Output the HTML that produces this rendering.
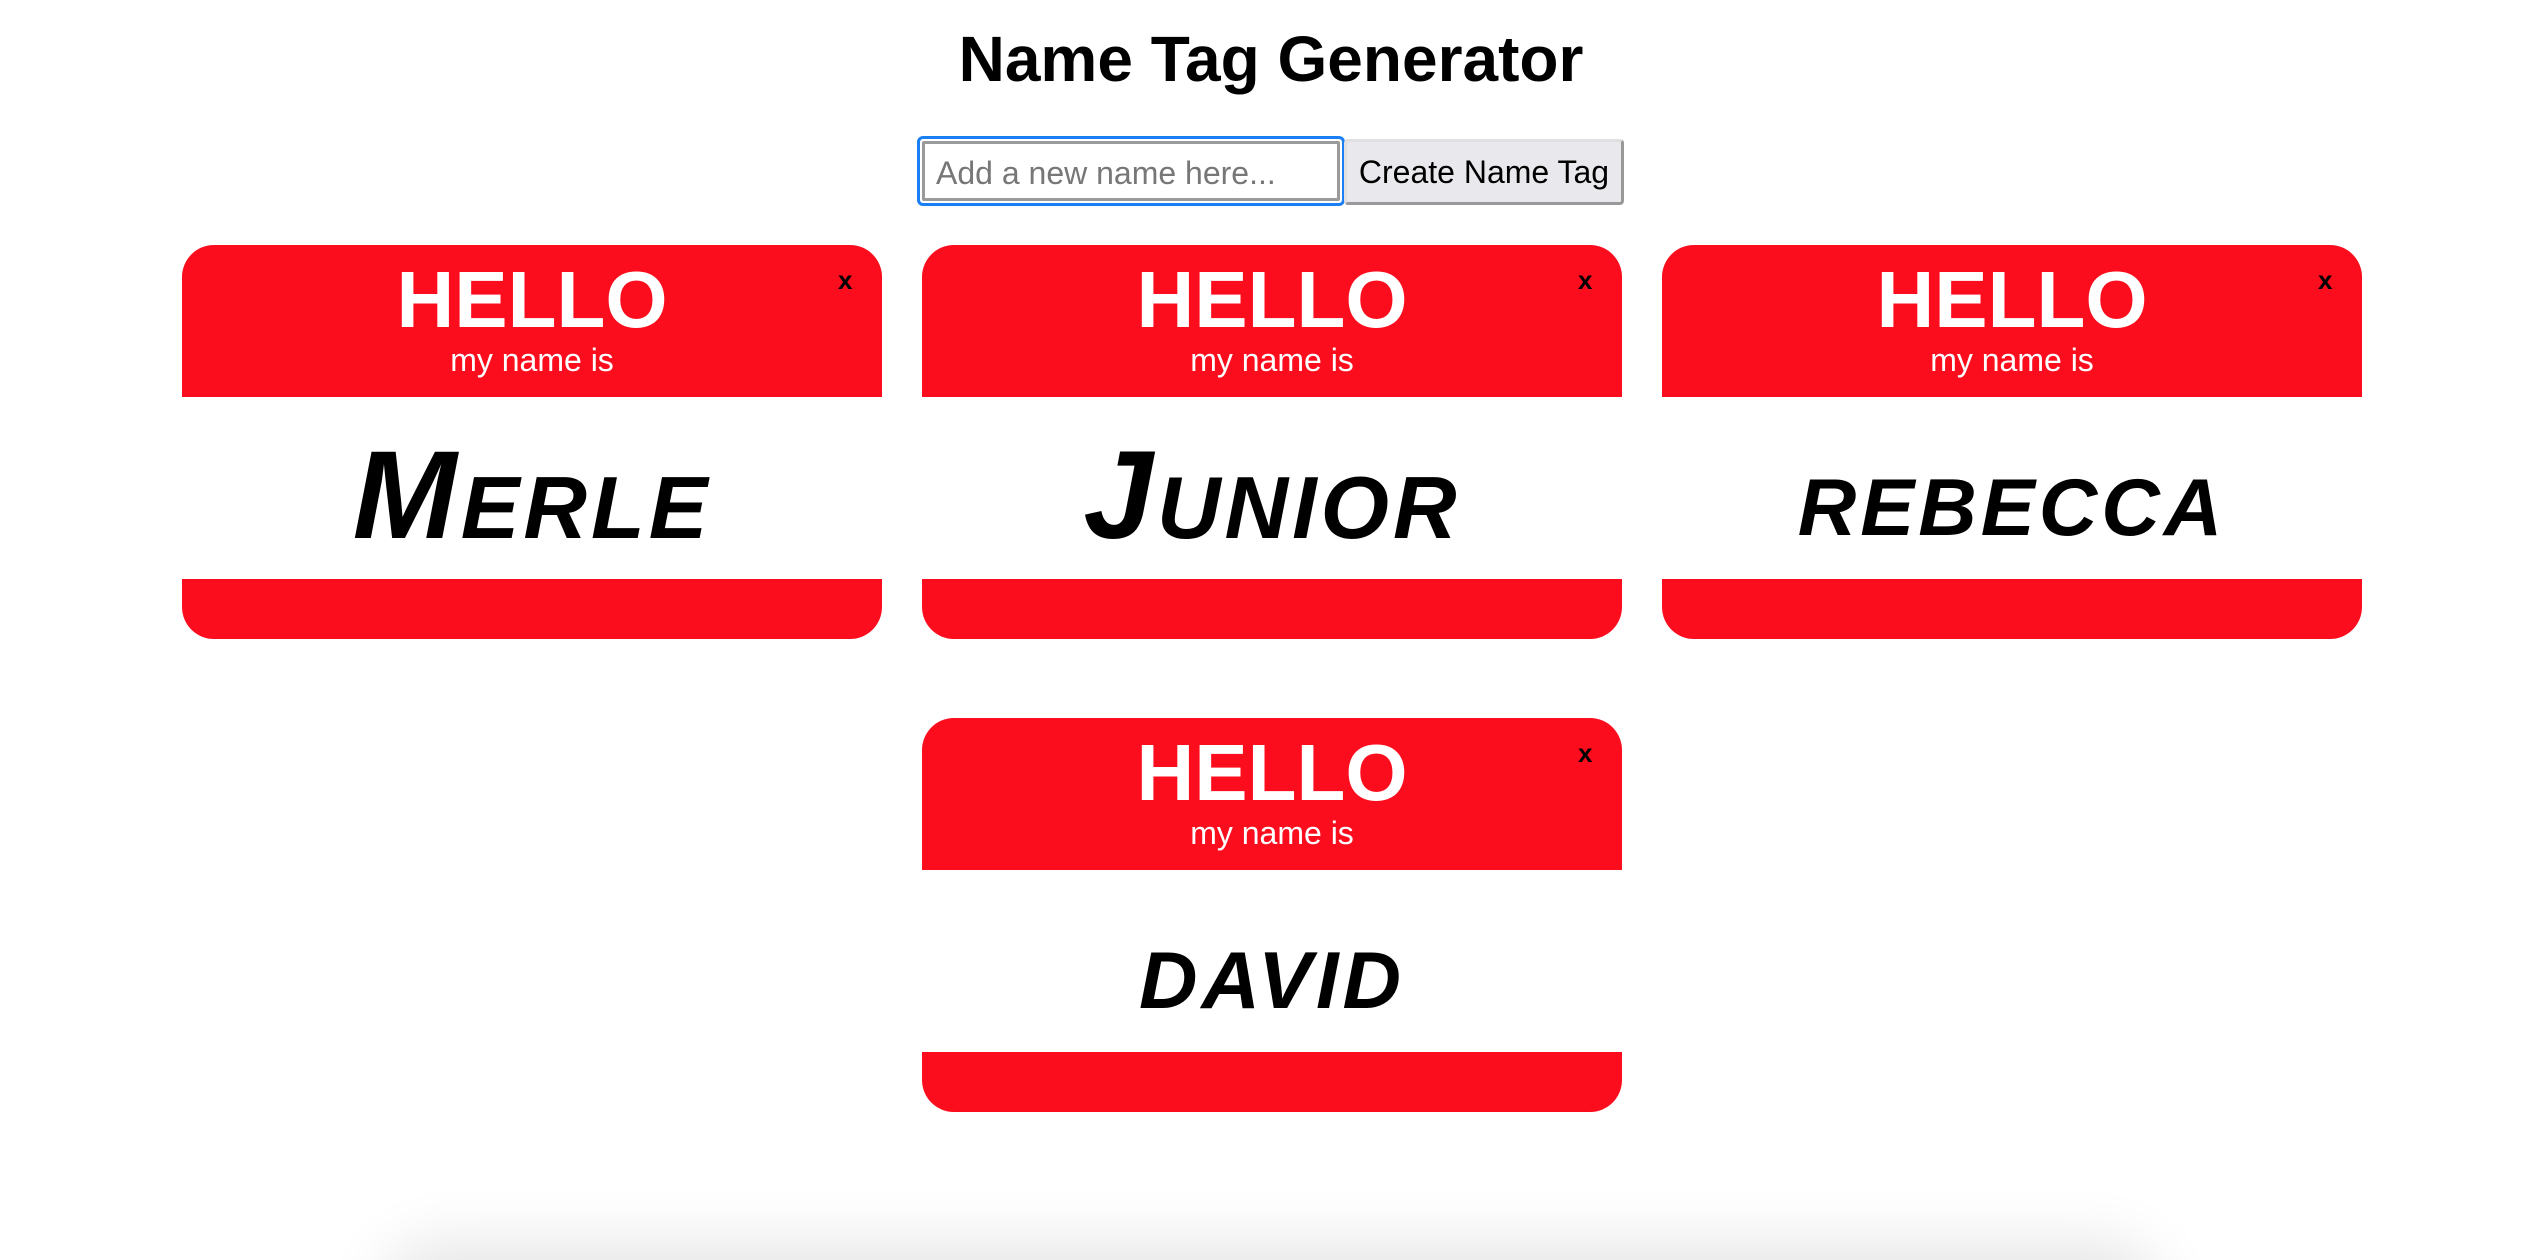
<!DOCTYPE html>
<html><head><meta charset="utf-8"><style>
html,body{margin:0;padding:0;background:#fff;width:2542px;height:1260px;overflow:hidden;position:relative;font-family:"Liberation Sans",Arial,sans-serif;}
h1{position:absolute;left:0;width:2542px;margin:0;text-align:center;font-size:64px;font-weight:bold;line-height:64px;top:27px;}
.inp{position:absolute;left:917px;top:136px;width:428px;height:70px;border:3px solid #1a7ff5;border-radius:6px;box-sizing:border-box;background:#fff;}
.inp:after{content:"";position:absolute;inset:2px;border:3px solid #9a9a9a;border-radius:2px;}
.inp span{position:absolute;left:16px;top:16px;font-size:32px;color:#777;}
.btn{position:absolute;left:1344px;top:139px;width:280px;height:66px;box-sizing:border-box;background:#e9e9ed;border:3px solid #e0e0e0;border-right-color:#999;border-bottom-color:#999;border-radius:4px;font-size:32px;text-align:center;line-height:60px;color:#000;}
.card{position:absolute;width:700px;height:394px;border-radius:32px;overflow:hidden;background:#fc0d1e;}
.card .mid{position:absolute;left:0;top:152px;width:700px;height:182px;background:#fff;}
.card .hello{position:absolute;top:15px;width:700px;text-align:center;color:#fff;font-weight:bold;font-size:80px;line-height:80px;}
.card .my{position:absolute;top:97px;width:700px;text-align:center;color:#fff;font-size:32px;line-height:36px;}
.card .x{position:absolute;left:656px;top:20px;font-size:26px;font-weight:bold;color:#000;}
.card .nm{position:absolute;top:8px;width:700px;text-align:center;font-size:125px;line-height:182px;font-weight:bold;font-style:italic;font-variant:small-caps;letter-spacing:4px;color:#000;}
.clip{position:absolute;left:0;top:1100px;width:2542px;height:160px;overflow:hidden;}
.shadow{position:absolute;left:400px;width:1742px;top:162px;height:100px;border-radius:40px;background:#e6e6e6;box-shadow:0 0 60px 20px rgba(0,0,0,0.10);}
</style></head><body>
<h1>Name Tag Generator</h1>
<div class="inp"><span>Add a new name here...</span></div>
<div class="btn">Create Name Tag</div>

<div class="card" style="left:182px;top:245px"><div class="hello">HELLO</div><div class="my">my name is</div><div class="x">x</div><div class="mid"><div class="nm">Merle</div></div></div>
<div class="card" style="left:922px;top:245px"><div class="hello">HELLO</div><div class="my">my name is</div><div class="x">x</div><div class="mid"><div class="nm">Junior</div></div></div>
<div class="card" style="left:1662px;top:245px"><div class="hello">HELLO</div><div class="my">my name is</div><div class="x">x</div><div class="mid"><div class="nm" style="font-size:115px">rebecca</div></div></div>
<div class="card" style="left:922px;top:718px"><div class="hello">HELLO</div><div class="my">my name is</div><div class="x">x</div><div class="mid"><div class="nm" style="font-size:115px">david</div></div></div>

<div class="clip"><div class="shadow"></div></div>
</body></html>
